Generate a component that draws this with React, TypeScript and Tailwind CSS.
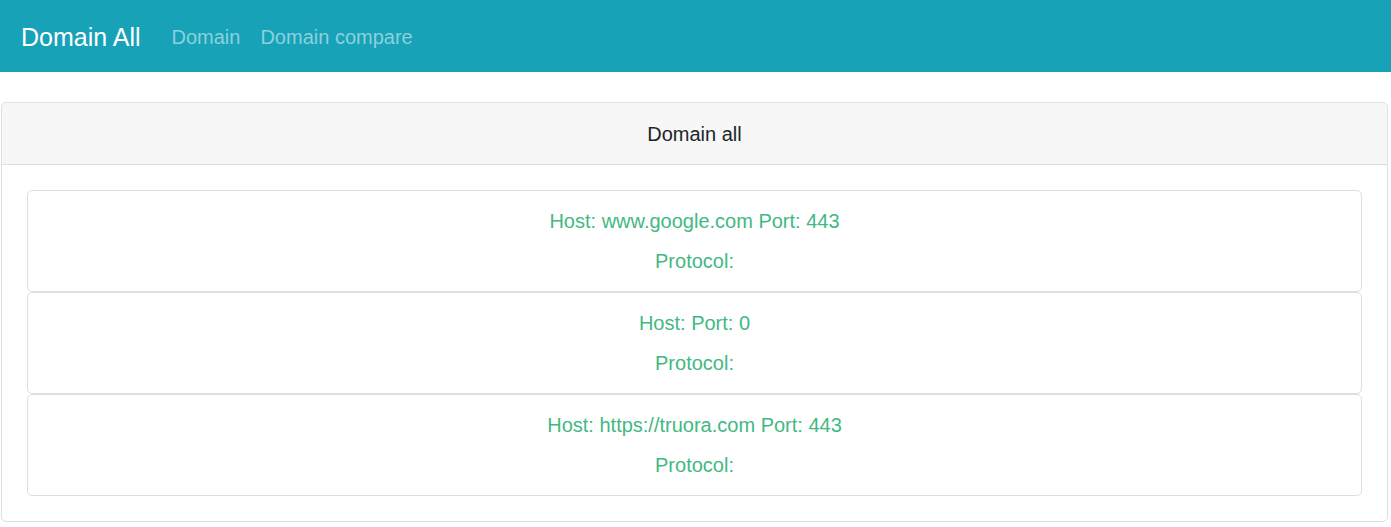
const domains = [
  { host: 'www.google.com', port: 443, protocol: '' },
  { host: '', port: 0, protocol: '' },
  { host: 'https://truora.com', port: 443, protocol: '' },
];

export default function App() {
  return (
    <div className="min-h-screen bg-white font-['Liberation_Sans',Arial,sans-serif]">
      <nav className="flex h-[72px] items-center bg-[#17a2b8] px-[21px] pt-[2px]">
        <span className="mr-[31px] text-[25px] leading-none text-white">Domain All</span>
        <div className="flex items-center gap-[20px] text-[20px] leading-none text-[#8bd1dc]">
          <a>Domain</a>
          <a>Domain compare</a>
        </div>
      </nav>

      <div className="ml-px mr-[3px] mt-[30px] rounded-[5px] border border-[#dfdfdf]">
        <div className="flex h-[62px] items-center justify-center rounded-t-[5px] border-b border-[#dfdfdf] bg-[#f7f7f7] text-[20px] text-[#212529]">
          Domain all
        </div>
        <div className="px-[25px] pb-[25px] pt-[25px]">
          {domains.map((d, i) => (
            <div
              key={i}
              className="flex h-[102px] flex-col items-center justify-center gap-[10px] rounded-[5px] border border-[#dfdfdf] text-[20px] leading-[30px] text-[#42b983]"
            >
              <p>
                Host: {d.host ? d.host + ' ' : ''}Port: {d.port}
              </p>
              <p>Protocol: {d.protocol}</p>
            </div>
          ))}
        </div>
      </div>
    </div>
  );
}
